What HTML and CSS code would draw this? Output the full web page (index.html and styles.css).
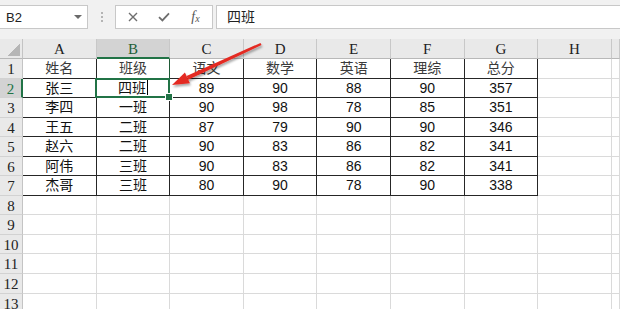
FILE: index.html
```html
<!DOCTYPE html>
<html lang="zh-CN">
<head>
    <meta charset="UTF-8">
    <title>成绩表</title>
    <link rel="stylesheet" href="styles.css">
</head>
<body>
    <!-- Formula bar -->
    <div class="toolbar">
        <div class="namebox"><span>B2</span><i class="drop"></i></div>
        <div class="dots"><i></i><i></i><i></i></div>
        <div class="fbtns">
            <span class="slot">
                <svg width="10" height="10" viewBox="0 0 10 10"><path d="M1 1L9 9M9 1L1 9" stroke="#6e6e6e" stroke-width="1.4"/></svg>
            </span>
            <span class="slot">
                <svg width="12" height="10" viewBox="0 0 12 10"><path d="M1 5.2L4.4 8.4L11 1.4" fill="none" stroke="#6e6e6e" stroke-width="1.8"/></svg>
            </span>
            <span class="slot fx">f<small>x</small></span>
        </div>
        <div class="finput">四班</div>
    </div>

    <!-- Sheet -->
    <div class="sheet">
        <div class="corner"><i></i></div>
        <div class="ch">A</div><div class="ch sel">B</div><div class="ch">C</div><div class="ch">D</div>
        <div class="ch">E</div><div class="ch">F</div><div class="ch">G</div><div class="ch">H</div><div class="ch"></div>

        <div class="rh">1</div>
        <div class="c t hd">姓名</div><div class="c t hd b1">班级</div><div class="c t hd">语文</div><div class="c t hd">数学</div>
        <div class="c t hd">英语</div><div class="c t hd">理综</div><div class="c t hd">总分</div><div class="c"></div><div class="c"></div>

        <div class="rh sel">2</div>
        <div class="c t">张三</div><div class="c t cur">四班<span class="ibeam"></span></div><div class="c t">89</div><div class="c t">90</div>
        <div class="c t">88</div><div class="c t">90</div><div class="c t">357</div><div class="c"></div><div class="c"></div>

        <div class="rh">3</div>
        <div class="c t">李四</div><div class="c t">一班</div><div class="c t">90</div><div class="c t">98</div>
        <div class="c t">78</div><div class="c t">85</div><div class="c t">351</div><div class="c"></div><div class="c"></div>

        <div class="rh">4</div>
        <div class="c t">王五</div><div class="c t">二班</div><div class="c t">87</div><div class="c t">79</div>
        <div class="c t">90</div><div class="c t">90</div><div class="c t">346</div><div class="c"></div><div class="c"></div>

        <div class="rh">5</div>
        <div class="c t">赵六</div><div class="c t">二班</div><div class="c t">90</div><div class="c t">83</div>
        <div class="c t">86</div><div class="c t">82</div><div class="c t">341</div><div class="c"></div><div class="c"></div>

        <div class="rh">6</div>
        <div class="c t">阿伟</div><div class="c t">三班</div><div class="c t">90</div><div class="c t">83</div>
        <div class="c t">86</div><div class="c t">82</div><div class="c t">341</div><div class="c"></div><div class="c"></div>

        <div class="rh">7</div>
        <div class="c t">杰哥</div><div class="c t">三班</div><div class="c t">80</div><div class="c t">90</div>
        <div class="c t">78</div><div class="c t">90</div><div class="c t">338</div><div class="c"></div><div class="c"></div>

        <div class="rh">8</div>
        <div class="c"></div><div class="c"></div><div class="c"></div><div class="c"></div><div class="c"></div><div class="c"></div><div class="c"></div><div class="c"></div><div class="c"></div>
        <div class="rh">9</div>
        <div class="c"></div><div class="c"></div><div class="c"></div><div class="c"></div><div class="c"></div><div class="c"></div><div class="c"></div><div class="c"></div><div class="c"></div>
        <div class="rh">10</div>
        <div class="c"></div><div class="c"></div><div class="c"></div><div class="c"></div><div class="c"></div><div class="c"></div><div class="c"></div><div class="c"></div><div class="c"></div>
        <div class="rh">11</div>
        <div class="c"></div><div class="c"></div><div class="c"></div><div class="c"></div><div class="c"></div><div class="c"></div><div class="c"></div><div class="c"></div><div class="c"></div>
        <div class="rh">12</div>
        <div class="c"></div><div class="c"></div><div class="c"></div><div class="c"></div><div class="c"></div><div class="c"></div><div class="c"></div><div class="c"></div><div class="c"></div>
        <div class="rh">13</div>
        <div class="c"></div><div class="c"></div><div class="c"></div><div class="c"></div><div class="c"></div><div class="c"></div><div class="c"></div><div class="c"></div><div class="c"></div>
    </div>

    <!-- Red annotation arrow -->
    <svg class="arrow" width="110" height="65" viewBox="0 0 110 65">
        <defs>
            <filter id="shade" x="-20%" y="-20%" width="140%" height="160%">
                <feDropShadow dx="1" dy="2" stdDeviation="1.2" flood-color="#000" flood-opacity="0.35"/>
            </filter>
        </defs>
        <g filter="url(#shade)" fill="#e42a22">
            <polygon points="101.5,10.1 100.5,7.9 26.6,41.1 28.2,44.7"/>
            <polygon points="12,50 24.9,37.5 29.9,48.3"/>
        </g>
    </svg>
</body>
</html>
```

FILE: styles.css
```css
* {
    box-sizing: border-box;
}
body {
    margin: 0;
    width: 620px;
    height: 309px;
    overflow: hidden;
    background: #fff;
    position: relative;
    font-family: "Liberation Sans", "Noto Sans CJK SC", sans-serif;
    color: #111;
}

/* formula bar */
.toolbar {
    height: 39px;
    background: #f1f1f1;
    display: flex;
    align-items: flex-start;
    padding-top: 5px;
}
.namebox {
    width: 89px;
    height: 24px;
    margin-left: -1px;
    background: #fff;
    border: 1px solid #c8c8c8;
    display: flex;
    align-items: center;
    justify-content: space-between;
    padding: 0 5px 0 6px;
    font-size: 13px;
    color: #222;
}
.drop {
    width: 0;
    height: 0;
    border-left: 4px solid transparent;
    border-right: 4px solid transparent;
    border-top: 4px solid #6a6a6a;
}
.dots {
    width: 27px;
    display: flex;
    flex-direction: column;
    align-items: center;
    gap: 2px;
    padding-top: 7px;
}
.dots i {
    width: 2px;
    height: 2px;
    background: #b4b4b4;
}
.fbtns {
    width: 98px;
    height: 24px;
    background: #fff;
    border: 1px solid #c8c8c8;
    display: flex;
    align-items: center;
    padding-left: 1px;
}
.slot {
    width: 31px;
    display: flex;
    justify-content: center;
    align-items: center;
}
.fx {
    font-family: "Liberation Serif", serif;
    font-style: italic;
    font-size: 14px;
    color: #555;
    padding-left: 2px;
}
.fx small {
    font-size: 10px;
    margin-top: 3px;
}
.finput {
    flex: 1;
    height: 24px;
    margin-left: 3px;
    background: #fff;
    border: 1px solid #c8c8c8;
    border-right: none;
    padding-left: 10px;
    font-family: "Noto Sans CJK SC", sans-serif;
    font-size: 14px;
    line-height: 21px;
    color: #222;
}

/* grid */
.sheet {
    display: grid;
    grid-template-columns: 23px repeat(8, 73.6px) 1fr;
    grid-template-rows: 20px repeat(13, 19.55px);
}
.corner {
    background: #e9e9e9;
    border-right: 1px solid #c4c4c4;
    border-bottom: 1px solid #b8b8b8;
    display: flex;
    align-items: flex-end;
    justify-content: flex-end;
    padding: 0 2px 2px 0;
}
.corner i {
    width: 13px;
    height: 13px;
    background: linear-gradient(to bottom right, transparent 50%, #b6b6b6 50%);
}
.ch {
    background: #e9e9e9;
    border-right: 1px solid #c8c8c8;
    border-bottom: 1px solid #b8b8b8;
    font-family: "Liberation Serif", serif;
    font-size: 15px;
    line-height: 20px;
    text-align: center;
    color: #222;
}
.ch.sel {
    background: #d3d3d3;
    border-bottom: 2px solid #217346;
    color: #1d5f37;
}
.rh {
    background: #e9e9e9;
    border-right: 1px solid #c4c4c4;
    border-bottom: 1px solid #d2d2d2;
    font-family: "Liberation Serif", serif;
    font-size: 15px;
    line-height: 20px;
    text-align: center;
    color: #222;
}
.rh.sel {
    background: #d3d3d3;
    border-right: 2px solid #217346;
    color: #217346;
}
.c {
    border-right: 1px solid #dadada;
    border-bottom: 1px solid #dadada;
    font-size: 14px;
    line-height: 19px;
    text-align: center;
    white-space: nowrap;
}
.c.t {
    border-color: #262626;
}
.c.hd {
    color: #3a3a3a;
}
.c.b1 {
    border-right-color: #1f5a36;
}
.cur {
    position: relative;
}
.cur::after {
    content: "";
    position: absolute;
    left: -2px;
    top: -1px;
    right: -1px;
    bottom: -1px;
    border: 2px solid #217346;
}
.cur::before {
    content: "";
    position: absolute;
    right: -4px;
    bottom: -4px;
    width: 6px;
    height: 6px;
    background: #217346;
    border: 1px solid #fff;
    z-index: 2;
}
.ibeam {
    display: inline-block;
    width: 1px;
    height: 15px;
    background: #000;
    vertical-align: -2px;
    margin-left: 1px;
}

/* annotation */
.arrow {
    position: absolute;
    left: 160px;
    top: 35px;
    pointer-events: none;
}
```
